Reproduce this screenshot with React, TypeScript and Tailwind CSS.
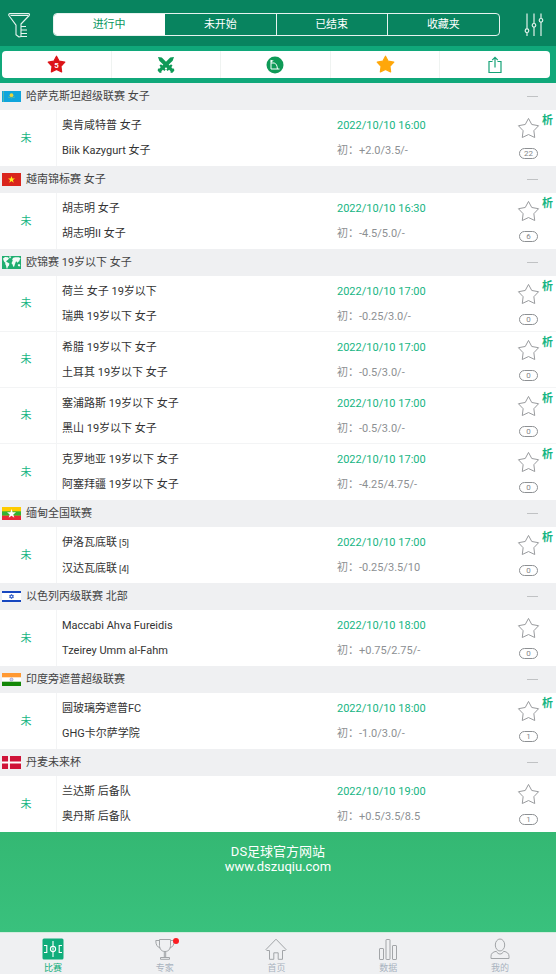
import React from 'react';

type FlagName = 'kz' | 'vn' | 'world' | 'mm' | 'il' | 'in' | 'dk';

interface Match {
  home: string;
  away: string;
  homeRank?: number;
  awayRank?: number;
  time: string;
  odds: string;
  count: number;
  analysis?: boolean;
}

interface League {
  name: string;
  flag: FlagName;
  matches: Match[];
}

const leagues: League[] = [
  {
    name: '哈萨克斯坦超级联赛 女子',
    flag: 'kz',
    matches: [
      { home: '奥肯咸特普 女子', away: 'Biik Kazygurt 女子', time: '2022/10/10 16:00', odds: '+2.0/3.5/-', count: 22, analysis: true }
    ]
  },
  {
    name: '越南锦标赛 女子',
    flag: 'vn',
    matches: [
      { home: '胡志明 女子', away: '胡志明II 女子', time: '2022/10/10 16:30', odds: '-4.5/5.0/-', count: 6, analysis: true }
    ]
  },
  {
    name: '欧锦赛 19岁以下 女子',
    flag: 'world',
    matches: [
      { home: '荷兰 女子 19岁以下', away: '瑞典 19岁以下 女子', time: '2022/10/10 17:00', odds: '-0.25/3.0/-', count: 0, analysis: true },
      { home: '希腊 19岁以下 女子', away: '土耳其 19岁以下 女子', time: '2022/10/10 17:00', odds: '-0.5/3.0/-', count: 0, analysis: true },
      { home: '塞浦路斯 19岁以下 女子', away: '黑山 19岁以下 女子', time: '2022/10/10 17:00', odds: '-0.5/3.0/-', count: 0, analysis: true },
      { home: '克罗地亚 19岁以下 女子', away: '阿塞拜疆 19岁以下 女子', time: '2022/10/10 17:00', odds: '-4.25/4.75/-', count: 0, analysis: true }
    ]
  },
  {
    name: '缅甸全国联赛',
    flag: 'mm',
    matches: [
      { home: '伊洛瓦底联', homeRank: 5, away: '汉达瓦底联', awayRank: 4, time: '2022/10/10 17:00', odds: '-0.25/3.5/10', count: 0, analysis: true }
    ]
  },
  {
    name: '以色列丙级联赛 北部',
    flag: 'il',
    matches: [
      { home: 'Maccabi Ahva Fureidis', away: 'Tzeirey Umm al-Fahm', time: '2022/10/10 18:00', odds: '+0.75/2.75/-', count: 0 }
    ]
  },
  {
    name: '印度旁遮普超级联赛',
    flag: 'in',
    matches: [
      { home: '圆玻璃旁遮普FC', away: 'GHG卡尔萨学院', time: '2022/10/10 18:00', odds: '-1.0/3.0/-', count: 1, analysis: true }
    ]
  },
  {
    name: '丹麦未来杯',
    flag: 'dk',
    matches: [
      { home: '兰达斯 后备队', away: '奥丹斯 后备队', time: '2022/10/10 19:00', odds: '+0.5/3.5/8.5', count: 1 }
    ]
  }
];

const tabs = ['进行中', '未开始', '已结束', '收藏夹'];

const STAR = 'M12 1.500L15.400 7.800 22.500 9.100 17.600 14.300 18.500 21.400 12 18.300 5.500 21.400 6.400 14.300 1.500 9.100 8.600 7.800z';

const Flag: React.FC<{ name: FlagName }> = ({ name }) => {
  switch (name) {
    case 'kz':
      return (
        <svg width="19" height="11" viewBox="0 0 19 11">
          <rect width="19" height="11" fill="#0fa5dc" />
          <path d="M1.500 0v11" stroke="#5fb9a0" strokeWidth="0.8" />
          <circle cx="9.500" cy="4.200" r="1.900" fill="#e8d53a" />
          <path d="M5.800 5.500c1 2.200 6.400 2.200 7.400 0-1.200 1-2.500 1.200-3.700 1.200s-2.500-.2-3.700-1.200z" fill="#c9cf45" />
        </svg>
      );
    case 'vn':
      return (
        <svg width="19" height="13" viewBox="0 0 19 13">
          <rect width="19" height="13" fill="#da251d" />
          <path d="M9.500 3l.9 2.500h2.600l-2.100 1.600.8 2.600-2.200-1.600-2.200 1.600.8-2.600L6 5.500h2.600z" fill="#ffef1c" />
        </svg>
      );
    case 'world':
      return (
        <svg width="19" height="13" viewBox="0 0 19 13">
          <rect width="19" height="13" fill="#1fae70" />
          <path d="M1 2.500l2-1.500 3 .3 1 1.200-1.200 1.500-1 .4-.6 1.400 1.600.6 1.600 1.200-.4 1.800-1.200 1.400-.4 1.800-.8-.2-.6-3-.8-1.400.2-1.200-1-.8L1.600 4.400z" fill="#f3fbf7" />
          <path d="M7 .4h2.200l-.6 1.500-1 .6z" fill="#f3fbf7" />
          <path d="M10.200 3.200l1-1.400 2-.6 3.600.1 1.800 1-.8 1.200-.6 1.800-1.200.6-.4 1-.8-1.300-1 .2-.4 1.200-.6 1.600-.6 2-1 .2-.6-2.200-1-1.200.4-1.600.8-.8z" fill="#f3fbf7" />
          <path d="M15.800 8.600l1.700-.5.8 1.400-.8 1-1.500-.4z" fill="#f3fbf7" />
        </svg>
      );
    case 'mm':
      return (
        <svg width="19" height="13" viewBox="0 0 19 13">
          <rect width="19" height="13" fill="#fecb00" />
          <rect y="4.300" width="19" height="4.400" fill="#34b233" />
          <rect y="8.700" width="19" height="4.300" fill="#ea2839" />
          <path d="M9.500 2l1.100 3.300h3.400l-2.700 2.100 1 3.300-2.800-2-2.800 2 1-3.300L5 5.300h3.400z" fill="#fff" />
        </svg>
      );
    case 'il':
      return (
        <svg width="19" height="13" viewBox="0 0 19 13">
          <rect y="1" width="19" height="11" fill="#fff" />
          <rect y="1" width="19" height="2" fill="#1747c0" />
          <rect y="10" width="19" height="2" fill="#1747c0" />
          <path d="M9.500 4.200l2 3.400h-4zM9.500 8.800l-2-3.400h4z" fill="none" stroke="#1747c0" strokeWidth="0.700" />
        </svg>
      );
    case 'in':
      return (
        <svg width="19" height="13" viewBox="0 0 19 13">
          <rect width="19" height="13" fill="#fff" />
          <rect width="19" height="4.300" fill="#ff9933" />
          <rect y="8.700" width="19" height="4.300" fill="#138808" />
          <circle cx="9.500" cy="6.500" r="1.500" fill="#d5d6ee" stroke="#6c70b8" strokeWidth="0.500" />
        </svg>
      );
    case 'dk':
      return (
        <svg width="19" height="13" viewBox="0 0 19 13">
          <rect width="19" height="13" fill="#cf1338" />
          <path d="M7 0v13M0 6.500h19" stroke="#fff" strokeWidth="1.800" />
        </svg>
      );
  }
};

const FilterIcon = () => (
  <svg width="24" height="26" viewBox="0 0 24 26" fill="none" stroke="#e8f5f0" strokeWidth="1.100" strokeLinejoin="round">
    <path d="M13 24.500l-2 .5-3-2.200v-9.700L.9 3.500C.5 2.500.8 1.600 2 1.600h18.500c1 0 1.300 1 .7 1.900L13 12v13" />
    <path d="M2.500 3.500h17.500M13 14.500h5M13 18h6M13 21.500h6M13 24.500h6" />
  </svg>
);

const SlidersIcon = () => (
  <svg width="20" height="26" viewBox="0 0 20 26" fill="none" stroke="#dff1ea" strokeWidth="1.200">
    <path d="M3 1.500v15.500M3 20.500v3.500M10 1.500v10M10 15v9M17 1.500v5M17 10v14" />
    <circle cx="3" cy="18.700" r="1.800" />
    <circle cx="10" cy="13.300" r="1.800" />
    <circle cx="17" cy="8.300" r="1.800" />
  </svg>
);

const SwordsIcon = () => (
  <svg width="18" height="18" viewBox="0 0 18 18" fill="#0f9a57">
    <path d="M1 1l3.800.4 7.900 8.100 1.300-1.200 1.500 1.200-1.200 1.700 1.500 1.500 1.200-.2.300 2.300-2.200 2.100-1.700-.3.200-1.300-1.500-1.500-1.600 1.300-1.300-1.500 1.100-1.200-8-7.700z" />
    <path d="M17 1l-3.800.4-7.900 8.100L4 8.300 2.500 9.500l1.200 1.700-1.500 1.500-1.200-.2-.3 2.300 2.200 2.100 1.700-.3-.2-1.300 1.500-1.500 1.600 1.300 1.300-1.500-1.100-1.200 8-7.700z" />
  </svg>
);

const CornerIcon = () => (
  <svg width="18" height="18" viewBox="0 0 18 18" fill="none">
    <circle cx="9" cy="9" r="8.500" fill="#0f9a57" />
    <path d="M5 4.500V13h8.500M5 7h3.200c2 .6 3 2.500 3.200 6" stroke="#fff" strokeWidth="1" />
    <path d="M4.500 3.800l3.300 1-2.800 1.500z" fill="#fff" />
  </svg>
);

const ShareIcon = () => (
  <svg width="16" height="18" viewBox="0 0 16 18" fill="none" stroke="#16a277" strokeWidth="1.200">
    <path d="M5.500 5.500H2v11h12v-11h-3.500M8 11.500V1.500M5.200 4.200L8 1.300l2.800 2.900" />
  </svg>
);

const PitchIcon = () => (
  <svg width="22" height="22" viewBox="0 0 22 22" fill="none" stroke="#fff" strokeWidth="1.100">
    <rect x="0.500" y="0.500" width="21" height="21" rx="1.500" fill="#10ad7b" stroke="none" />
    <path d="M11 3v16M2 7.500h2.800v7H2M20 7.500h-2.800v7H20" />
    <circle cx="11" cy="11" r="2.600" fill="#10ad7b" />
    <path d="M11 9.500v3" />
  </svg>
);

const TrophyIcon = () => (
  <svg width="22" height="22" viewBox="0 0 22 22" fill="none" stroke="#a2a5a8" strokeWidth="1">
    <path d="M5.500 1.500h11v6c0 3.500-2 6-5.500 6s-5.500-2.500-5.500-6zM10.300 13.500v5.500M11.700 13.500v5.500M6.500 21.300v-1.800h9v1.800z" />
    <path d="M5.500 2.500H1.800c0 4 1.200 6.500 4.500 7.500M16.500 2.500h3.700c0 4-1.200 6.500-4.500 7.500" />
  </svg>
);

const HomeIcon = () => (
  <svg width="22" height="22" viewBox="0 0 22 22" fill="none" stroke="#a2a5a8" strokeWidth="1" strokeLinejoin="round">
    <path d="M11 1.200L1 11.500l.8 1h2.700v8.800h4.300v-6.500h4.400v6.500h4.300v-8.800h2.700l.8-1z" />
  </svg>
);

const ChartIcon = () => (
  <svg width="20" height="22" viewBox="0 0 20 22" fill="none" stroke="#a2a5a8" strokeWidth="1">
    <rect x="1.500" y="10.500" width="4" height="11" rx="0.500" />
    <rect x="8" y="1.500" width="4" height="20" rx="0.500" />
    <rect x="14.500" y="7.500" width="4" height="14" rx="0.500" />
  </svg>
);

const UserIcon = () => (
  <svg width="20" height="22" viewBox="0 0 20 22" fill="none" stroke="#a2a5a8" strokeWidth="1">
    <ellipse cx="10" cy="7" rx="4.700" ry="6" />
    <path d="M6.300 13.300c-3.500.6-5.300 2.200-5.300 5v2.200h18v-2.200c0-2.800-1.800-4.400-5.300-5-1 1.900-2.300 2.700-3.700 2.700s-2.700-.8-3.700-2.700z" />
  </svg>
);

const tools = [
  {
    label: '竞彩',
    icon: (
      <svg width="19" height="19" viewBox="0 0 24 24">
        <path d={STAR} fill="#dc1418" stroke="#dc1418" strokeWidth="1.500" strokeLinejoin="round" />
        <text x="12" y="16.500" textAnchor="middle" fontSize="10" fontWeight="700" fill="#fff">5</text>
      </svg>
    )
  },
  { label: '对阵', icon: <SwordsIcon /> },
  { label: '角球', icon: <CornerIcon /> },
  {
    label: '收藏',
    icon: (
      <svg width="19" height="19" viewBox="0 0 24 24">
        <path d={STAR} fill="#ffa70a" stroke="#ffa70a" strokeWidth="1.500" strokeLinejoin="round" />
      </svg>
    )
  },
  { label: '分享', icon: <ShareIcon /> }
];

const navItems = [
  { label: '比赛', icon: <PitchIcon />, active: true },
  { label: '专家', icon: <TrophyIcon />, dot: true },
  { label: '首页', icon: <HomeIcon /> },
  { label: '数据', icon: <ChartIcon /> },
  { label: '我的', icon: <UserIcon /> }
];

const Team: React.FC<{ name: string; rank?: number }> = ({ name, rank }) => (
  <p>
    {name}
    {rank && <span className="ml-[2px] text-[9px]">[{rank}]</span>}
  </p>
);

const MatchRow: React.FC<{ match: Match }> = ({ match }) => (
  <li className="flex h-14 border-b border-[#f3f4f5] bg-white last:border-b-0">
    <div className="flex w-[57px] items-center justify-center border-r border-[#f3f4f5] pt-[2px] pr-1 text-[#16b583]">未</div>
    <div className="min-w-0 flex-1 pt-[3px] pl-[5px] leading-[25px] text-[#333]">
      <Team name={match.home} rank={match.homeRank} />
      <Team name={match.away} rank={match.awayRank} />
    </div>
    <div className="w-[181px] pt-[3px] leading-[25px]">
      <time className="block text-[#16b583]">{match.time}</time>
      <p className="text-[#8d9093]">初：{match.odds}</p>
    </div>
    <div className="flex w-[38px]">
      <div className="flex w-[21px] flex-col items-center pt-[7px]">
        <button type="button" aria-label="收藏">
          <svg width="23" height="23" viewBox="0 0 24 24" className="block">
            <path d={STAR} fill="none" stroke="#94979a" strokeWidth="1" strokeLinejoin="round" />
          </svg>
        </button>
        <span className="mt-2 flex h-[11px] w-[19px] items-center justify-center rounded-full border border-[#8d9093] text-[8px] leading-none text-[#85888b]">
          {match.count}
        </span>
      </div>
      {match.analysis && (
        <a href="#analysis" className="ml-[3px] h-5 font-bold leading-[21px] text-[#16b583]">析</a>
      )}
    </div>
  </li>
);

const App: React.FC = () => {
  return (
    <div className="flex min-h-screen flex-col overflow-x-hidden bg-[#eff0f2] font-['Roboto','Noto_Sans_CJK_SC',sans-serif] text-[11px]">
      <header>
        <div className="flex h-[46px] items-center bg-[#08845f] pt-[3px] pr-3 pl-2">
          <button type="button" aria-label="筛选">
            <FilterIcon />
          </button>
          <div className="mr-6 ml-[21px] grid h-[23px] flex-1 grid-cols-4 divide-x divide-white/90 overflow-hidden rounded-[4px] border border-white/90">
            {tabs.map((tab, index) => (
              <button
                key={tab}
                type="button"
                className={`pt-[2px] ${index === 0 ? 'bg-white text-[#08965f]' : 'text-white'}`}
              >
                {tab}
              </button>
            ))}
          </div>
          <button type="button" aria-label="设置">
            <SlidersIcon />
          </button>
        </div>
        <div className="bg-[#10a87a] pt-[5px] pr-[6px] pb-[5px] pl-[2px]">
          <div className="grid h-[27px] grid-cols-5 divide-x divide-[#eff3f1] rounded-[4px] bg-white">
            {tools.map((tool) => (
              <button key={tool.label} type="button" aria-label={tool.label} className="flex items-center justify-center">
                {tool.icon}
              </button>
            ))}
          </div>
        </div>
      </header>

      <main>
        {leagues.map((league) => (
          <section key={league.name}>
            <div className="flex h-[27px] items-center bg-[#eff0f2] pl-[2px]">
              <Flag name={league.flag} />
              <h2 className="ml-[5px] flex-1 pt-[2px] text-[#444]">{league.name}</h2>
              <button type="button" aria-label="收起" className="mr-[18px] py-2">
                <span className="block h-px w-[11px] bg-[#c0c2c4]" />
              </button>
            </div>
            <ul>
              {league.matches.map((match) => (
                <MatchRow key={match.home} match={match} />
              ))}
            </ul>
          </section>
        ))}
      </main>

      <footer className="flex-1 bg-linear-to-b from-[#34b873] to-[#39c17d] pt-3 pb-8 text-center text-[13px] leading-[15px] text-white">
        <p>DS足球官方网站</p>
        <p>www.dszuqiu.com</p>
      </footer>

      <nav className="-ml-[3px] grid h-[42px] grid-cols-5 border-t border-[#d3ecdf] bg-[#eff0f2]">
        {navItems.map((item) => (
          <a
            key={item.label}
            href="#nav"
            className={`flex flex-col items-center pt-[5px] text-[9px] leading-4 ${item.active ? 'text-[#10ad7b]' : 'text-[#a9b3bf]'}`}
          >
            <span className="relative">
              {item.icon}
              {item.dot && <span className="absolute top-0 -right-[3px] h-[6px] w-[6px] rounded-full bg-[#fb1d22]" />}
            </span>
            {item.label}
          </a>
        ))}
      </nav>
    </div>
  );
};

export default App;
